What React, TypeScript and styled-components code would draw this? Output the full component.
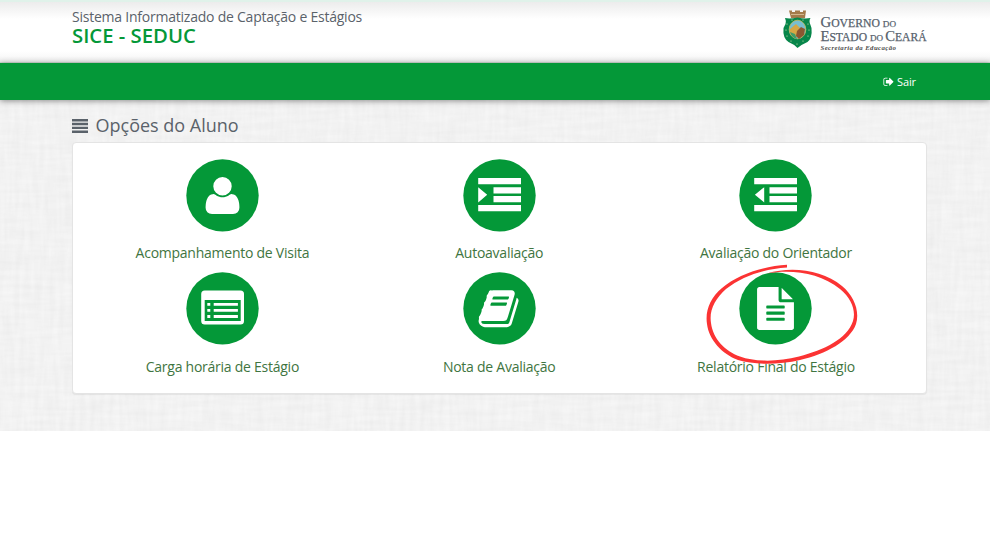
import React from 'react';
import styled, { createGlobalStyle } from 'styled-components';

const GREEN = '#049838';

const weave = (frequency: string, seed: number) =>
  `url("data:image/svg+xml,${encodeURIComponent(
    `<svg xmlns="http://www.w3.org/2000/svg" width="330" height="431"><filter id="f" x="0" y="0" width="100%" height="100%"><feTurbulence type="fractalNoise" baseFrequency="${frequency}" numOctaves="2" seed="${seed}" stitchTiles="stitch"/><feColorMatrix values="0 0 0 0 0  0 0 0 0 0  0 0 0 0 0  .035 0 0 0 -.009"/></filter><rect width="330" height="431" filter="url(#f)"/></svg>`,
  )}")`;

const GlobalStyle = createGlobalStyle`
  * { box-sizing: border-box; }
  body { margin: 0; background: #fff; font-family: 'Open Sans', sans-serif; overflow: hidden; }
`;

const Page = styled.div`
  width: 990px;
  height: 431px;
  overflow: hidden;
  background-color: #f6f6f6;
  background-image: ${weave('.025 .2', 4)}, ${weave('.2 .025', 9)};
`;

const Header = styled.header`
  height: 63px;
  padding: 7px 63px 0 72px;
  display: flex;
  justify-content: space-between;
  border-top: 2px solid #e0f2ea;
  background: linear-gradient(#ececec 0, #fff 17px, #fff 49px, #fafafa 54px, #ececec 60px, #b9cbbd 61px);
`;

const Brand = styled.div`
  color: #5a626a;
  white-space: nowrap;
`;

const SystemName = styled.div`
  font-size: 14px;
  letter-spacing: -.23px;
  line-height: 16px;
`;

const BrandName = styled.div`
  color: ${GREEN};
  font-size: 20.3px;
  font-weight: 600;
  line-height: 21px;
`;

const NavBar = styled.nav`
  height: 37px;
  background: ${GREEN};
  padding: 0 74px 0 0;
  display: flex;
  align-items: center;
  justify-content: flex-end;
  box-shadow: 0 1px 6px rgba(0, 0, 0, .42);
`;

const LogoutLink = styled.a`
  display: flex;
  align-items: center;
  gap: 2px;
  color: #fff;
  font-size: 11px;
  letter-spacing: -.1px;
  line-height: 14px;
`;

const Main = styled.main`
  padding: 15px 63px 0 72px;
`;

const Title = styled.h1`
  margin: 0;
  height: 27px;
  display: flex;
  gap: 7.5px;
  font-size: 18px;
  line-height: 21px;
  font-weight: 400;
  color: #5a626a;
  svg { margin-top: 4px; }
`;

const Panel = styled.section`
  position: relative;
  width: 855px;
  height: 252px;
  padding: 16px 11px 0;
  border: 1px solid #e4e4e4;
  border-radius: 4px;
  background: #fff;
  box-shadow: 0 1px 1px rgba(0, 0, 0, .06);
  display: grid;
  grid-template-columns: repeat(3, 276.8px);
  grid-auto-rows: 113.4px;
`;

const Option = styled.a`
  display: flex;
  flex-direction: column;
  align-items: center;
  color: #3f7541;
  font-size: 14px;
  letter-spacing: -.25px;
  line-height: 20px;
  white-space: nowrap;
`;

const Disc = styled.svg`
  width: 73px;
  height: 73px;
  margin-bottom: 11.2px;
  flex: none;
`;

const Logo = styled.svg`
  margin-top: -1px;
`;

const Marker = styled.svg`
  position: absolute;
  left: 627px;
  top: 116px;
  pointer-events: none;
`;

const Glyph = ({ d }: { d: string }) => (
  <path transform="translate(14.5 14.6) scale(.024)" fill="#fff" d={d} />
);

const USER =
  'M1600 1405q0 120-73 189.500t-194 69.500h-874q-121 0-194-69.500t-73-189.500q0-53 3.500-103.500t14-109 26.500-108.500 43-97.500 62-81 85.500-53.500 111.500-20q9 0 42 21.500t74.500 48 108 48 133.500 21.500 133.500-21.500 108-48 74.500-48 42-21.500q61 0 111.500 20t85.500 53.500 62 81 43 97.500 26.500 108.500 14 109 3.500 103.500zm-320-893q0 159-112.500 271.500t-271.500 112.500-271.500-112.500-112.500-271.500 112.500-271.500 271.500-112.500 271.500 112.500 112.500 271.500z';
const BOOK =
  'M1639 478q40 57 18 129l-275 906q-19 64-76.500 107.500t-122.500 43.500h-923q-77 0-148.500-53.500t-99.500-131.500q-24-67-2-127 0-4 3-27t4-37q1-8-3-21.500t-3-19.500q2-11 8-21t16.500-23.500 16.500-23.500q23-38 45-91.500t30-91.500q3-10 .5-30t-.5-28q3-11 17-28t17-23q21-36 42-92t25-90q1-9-2.500-32t.5-28q4-13 22-30.500t22-22.500q19-26 42.500-84.500t27.500-96.500q1-8-3-25.500t-2-26.500q2-8 9-18t18-23 17-21q8-12 16.500-30.500t15-35 16-36 19.500-32 26.500-23.500 36-11.500 47.500 5.500l-1 3q38-9 51-9h761q74 0 114 56t18 130l-274 906q-36 119-71.500 153.500t-128.500 34.500h-869q-27 0-38 15-11 16-1 43 24 70 144 70h923q29 0 56-15.500t35-41.500l300-987q7-22 5-57 38 15 59 43zm-1064 2q-4 13 2 22.500t20 9.500h608q13 0 25.500-9.500t16.500-22.500l21-64q4-13-2-22.500t-20-9.500h-608q-13 0-25.500 9.500t-16.500 22.500zm-83 256q-4 13 2 22.500t20 9.500h608q13 0 25.500-9.500t16.500-22.500l21-64q4-13-2-22.500t-20-9.500h-608q-13 0-25.500 9.500t-16.500 22.500z';
const FILE =
  'M1596 476q14 14 28 36h-472v-472q22 14 36 28zm-476 164h544v1056q0 40-28 68t-68 28h-1344q-40 0-68-28t-28-68v-1600q0-40 28-68t68-28h800v544q0 40 28 68t68 28zm160 736v-64q0-14-9-23t-23-9h-704q-14 0-23 9t-9 23v64q0 14 9 23t23 9h704q14 0 23-9t9-23zm0-256v-64q0-14-9-23t-23-9h-704q-14 0-23 9t-9 23v64q0 14 9 23t23 9h704q14 0 23-9t9-23zm0-256v-64q0-14-9-23t-23-9h-704q-14 0-23 9t-9 23v64q0 14 9 23t23 9h704q14 0 23-9t9-23z';
const SIGN_OUT =
  'M704 1440q0 4 1 20t.5 26.500-3 23.500-10 19.500-20.500 6.500h-320q-119 0-203.500-84.500t-84.500-203.500v-704q0-119 84.500-203.500t203.500-84.500h320q13 0 22.500 9.500t9.500 22.500q0 4 1 20t.5 26.500-3 23.500-10 19.500-20.500 6.500h-320q-66 0-113 47t-47 113v704q0 66 47 113t113 47h312l11.500 1 11.500 3 8 5.500 7 9 2 13.500zm928-544q0 26-19 45l-544 544q-19 19-45 19t-45-19-19-45v-288h-448q-26 0-45-19t-19-45v-384q0-26 19-45t45-19h448v-288q0-26 19-45t45-19 45 19l544 544q19 19 19 45z';

const indentBars = 'M14.700 18.700h42.800v6.200h-42.800zM30 27.800h27.500v6.200h-27.500zM30 36.700h27.500v6.200h-27.500zM14.700 45.700h42.800v6.200h-42.800z';

const options = [
  { label: 'Acompanhamento de Visita', icon: <Glyph d={USER} /> },
  { label: 'Autoavaliação', icon: <path fill="#fff" d={indentBars + 'M14.700 27.800l9 7.600-9 7.600z'} /> },
  { label: 'Avaliação do Orientador', icon: <path fill="#fff" d={indentBars + 'M24.700 27.800l-9.300 7.600 9.300 7.600z'} /> },
  {
    label: 'Carga horária de Estágio',
    icon: (
      <>
        <rect x="14.700" y="18" width="42.800" height="34" rx="3.500" fill="#fff" />
        <path fill={GREEN} d="M18.200 27.700h36v21h-36z" />
        <path fill="#fff" d="M20.800 30.600h3v2.800h-3zM20.800 36.600h3v2.800h-3zM20.800 42.700h3v2.800h-3zM27.200 30.600h24.200v2.800h-24.200zM27.200 36.600h24.200v2.800h-24.200zM27.200 42.700h24.200v2.800h-24.200z" />
      </>
    ),
  },
  { label: 'Nota de Avaliação', icon: <g transform="translate(.6 .2)"><Glyph d={BOOK} /></g> },
  { label: 'Relatório Final do Estágio', icon: <Glyph d={FILE} /> },
];

const StateLogo = () => (
  <Logo width="147" height="46" viewBox="780 8 147 46" role="img">
    <path fill="#a47b4b" d="M789 10.500h3v1.500h3v-1.500h5v1.500h3v-1.500h3l-1 7.500h-14z" />
    <path stroke="#d2b78c" strokeWidth="1" d="M791 14.500h13" />
    <path fill="#07864a" d="M785 18q5 1 12.500-.5q7 1.500 13 .5q-2 3 0 7l1 3q1 10-4 14q-5 2-10 6q-4-4-9-6q-6-4-5-14l2-4q1-3-.5-6z" />
    <ellipse cx="797.500" cy="29.500" rx="8.300" ry="9.300" fill="#78bed0" stroke="#d0bd60" strokeWidth=".8" />
    <path fill="#d6a744" d="M790 29l6-5 4 4v9h-7q-4-3-3-8z" />
    <path fill="#8c5630" d="M797 31l4-4 4 2-1 6-5 4-3-3z" />
    <path fill="#3f9c69" d="M790 32l5 2 2 5q-5-1-7-7z" />
    <g fill="#dce9b8">
      {[[787, 24], [786, 30], [787, 36], [791, 41], [797, 44], [803, 41], [808, 36], [809, 30], [808, 24], [792, 20], [803, 20]].map(([x, y]) => (
        <circle key={`${x}-${y}`} cx={x} cy={y} r=".6" />
      ))}
    </g>
    <g fill="#56616c" stroke="#56616c" strokeWidth=".25" fontFamily="Liberation Serif, serif">
      <text x="820.500" y="27" fontSize="14.500" textLength="75.500" lengthAdjust="spacingAndGlyphs">
        G<tspan fontSize="11.500">OVERNO </tspan><tspan fontSize="9">DO</tspan>
      </text>
      <text x="820.500" y="40.500" fontSize="14.500" textLength="106" lengthAdjust="spacingAndGlyphs">
        E<tspan fontSize="11.500">STADO </tspan><tspan fontSize="9">DO </tspan>C<tspan fontSize="11.500">EARÁ</tspan>
      </text>
    </g>
    <text x="820.500" y="49.700" fontSize="6.800" fontWeight="700" fontStyle="italic" fill="#4c4c4c" fontFamily="Liberation Serif, serif" textLength="75.500">
      Secretaria da Educação
    </text>
  </Logo>
);

export default function App() {
  return (
    <>
      <GlobalStyle />
      <Page>
        <Header>
          <Brand>
            <SystemName>Sistema Informatizado de Captação e Estágios</SystemName>
            <BrandName>SICE - SEDUC</BrandName>
          </Brand>
          <StateLogo />
        </Header>
        <NavBar>
          <LogoutLink>
            <svg width="11.500" height="11.500" viewBox="0 0 1792 1792" fill="#fff"><path d={SIGN_OUT} /></svg>
            Sair
          </LogoutLink>
        </NavBar>
        <Main>
          <Title>
            <svg width="16" height="14" viewBox="0 0 16 14" fill="#5a626a">
              <path d="M0 0h16v2.400h-16zM0 3.800h16v2.400h-16zM0 7.700h16v2.400h-16zM0 11.500h16v2.400h-16z" />
            </svg>
            Opções do Aluno
          </Title>
          <Panel>
            {options.map(({ label, icon }) => (
              <Option key={label}>
                <Disc viewBox="-.5 -.4 73 73">
                  <circle cx="36" cy="36" r="36.200" fill={GREEN} />
                  {icon}
                </Disc>
                {label}
              </Option>
            ))}
            <Marker width="170" height="110" viewBox="700 259 170 110">
              <path
                fill="#fb3333"
                d="M787 264.800C765 266 738 274 722 288C710 298 705 311 707 324C709 340 722 354 738 360C754 365 779 365 800 360C826 354 850 341 856 324C860 311 854 296 842 286C822 270 792 266 767 273.500C792 269 820 273 840 289C852 299 856 311 853 321C847 339 824 350 799 356.500C778 362 755 362 740 356.500C725 351 713 339 711 323C709 310 715 299 726 289C743 276 764 269 787 267.500Z"
              />
            </Marker>
          </Panel>
        </Main>
      </Page>
    </>
  );
}
